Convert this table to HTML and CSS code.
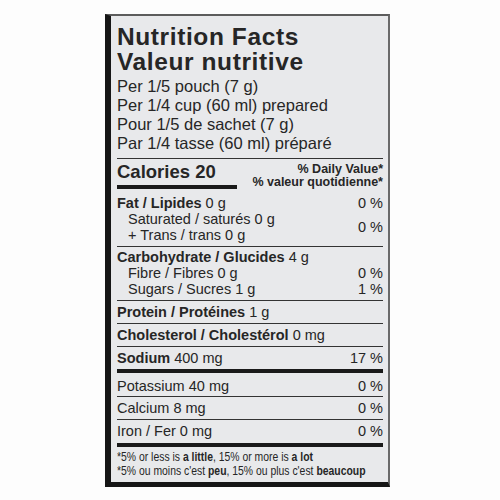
FILE: index.html
```html
<!DOCTYPE html>
<html lang="en">
<head>
    <meta charset="UTF-8">
    <meta name="viewport" content="width=device-width, initial-scale=1.0">
    <title>Nutrition Facts</title>
    <link rel="stylesheet" href="styles.css">
</head>
<body>
<div class="label">
    <div class="title">
        <h1>Nutrition Facts</h1>
        <h1>Valeur nutritive</h1>
    </div>
    <div class="serving">
        <p>Per 1/5 pouch (7 g)</p>
        <p>Per 1/4 cup (60 ml) prepared</p>
        <p>Pour 1/5 de sachet (7 g)</p>
        <p>Par 1/4 tasse (60 ml) préparé</p>
    </div>
    <div class="cal">
        <div class="cal-left">
            <p class="cal-text">Calories 20</p>
            <div class="cal-bar"></div>
        </div>
        <div class="dv">
            <p>% Daily Value*</p>
            <p>% valeur quotidienne*</p>
        </div>
    </div>
    <div class="sec fat">
        <div class="row"><span><b>Fat / Lipides</b> 0 g</span><span>0 %</span></div>
        <div class="row">
            <div>
                <p class="sub">Saturated / saturés 0 g</p>
                <p class="sub">+ Trans / trans 0 g</p>
            </div>
            <span>0 %</span>
        </div>
    </div>
    <div class="sec carb">
        <div class="row"><span><b>Carbohydrate / Glucides</b> 4 g</span></div>
        <div class="row"><span class="sub">Fibre / Fibres 0 g</span><span>0 %</span></div>
        <div class="row"><span class="sub">Sugars / Sucres 1 g</span><span>1 %</span></div>
    </div>
    <div class="sec single">
        <div class="row"><span><b>Protein / Protéines</b> 1 g</span></div>
    </div>
    <div class="sec single">
        <div class="row"><span><b>Cholesterol / Cholestérol</b> 0 mg</span></div>
    </div>
    <div class="sec sodium">
        <div class="row"><span><b>Sodium</b> 400 mg</span><span>17 %</span></div>
    </div>
    <div class="sec potassium">
        <div class="row"><span>Potassium 40 mg</span><span>0 %</span></div>
    </div>
    <div class="sec single">
        <div class="row"><span>Calcium 8 mg</span><span>0 %</span></div>
    </div>
    <div class="sec iron">
        <div class="row"><span>Iron / Fer 0 mg</span><span>0 %</span></div>
    </div>
    <div class="foot">
        <p><span>*5% or less is <b>a little</b>, 15% or more is <b>a lot</b></span></p>
        <p><span>*5% ou moins c'est <b>peu</b>, 15% ou plus c'est <b>beaucoup</b></span></p>
    </div>
</div>
</body>
</html>
```

FILE: styles.css
```css
*{
    padding: 0;
    margin: 0;
    box-sizing: border-box;
}
body{
    background-color: #fdfdfd;
    font-family: "Liberation Sans", Arial, sans-serif;
    color: #262626;
}
.label{
    width: 285px;
    margin-left: 105px;
    margin-top: 14px;
    padding: 0 5px 0 6px;
    background-color: #e8e9eb;
    border-left: 6px solid #161616;
    border-top: 2px solid #5c5c5c;
    border-right: 2px solid #6a6a6a;
    border-bottom: 5px solid #161616;
}
.title{
    margin-top: 8px;
}
.title h1{
    height: 25px;
    font-size: 24.5px;
    line-height: 25px;
    letter-spacing: 0.6px;
    font-weight: bold;
}
.serving{
    margin-top: 3px;
    padding-bottom: 5px;
    border-bottom: 1px solid #333;
    font-size: 16.5px;
    line-height: 19px;
}
.cal{
    display: flex;
    justify-content: space-between;
}
.cal-text{
    padding-top: 3px;
    font-size: 18.5px;
    line-height: 20px;
    font-weight: bold;
}
.cal-bar{
    width: 120px;
    height: 4px;
    margin-top: 3px;
    background-color: #1a1a1a;
}
.dv{
    padding-top: 4px;
    text-align: right;
    font-size: 12.5px;
    line-height: 13px;
    font-weight: bold;
}
.sec{
    font-size: 14.5px;
    line-height: 16px;
    border-bottom: 1px solid #333;
}
.row{
    display: flex;
    justify-content: space-between;
    align-items: center;
}
.sub{
    padding-left: 11px;
}
.fat{
    padding: 6px 0 3px;
}
.carb{
    padding: 2px 0 3px;
}
.single{
    padding: 3px 0;
}
.sodium{
    padding: 3px 0 3px;
    border-bottom: 4px solid #1a1a1a;
}
.potassium{
    padding: 5px 0 2px;
}
.iron{
    padding: 3px 0 4px;
    border-bottom: 4px solid #1a1a1a;
}
.foot{
    padding: 3px 0 4px;
    font-size: 13px;
    line-height: 14px;
    white-space: nowrap;
}
.foot span{
    display: inline-block;
    transform: scaleX(0.8);
    transform-origin: left center;
}
```
